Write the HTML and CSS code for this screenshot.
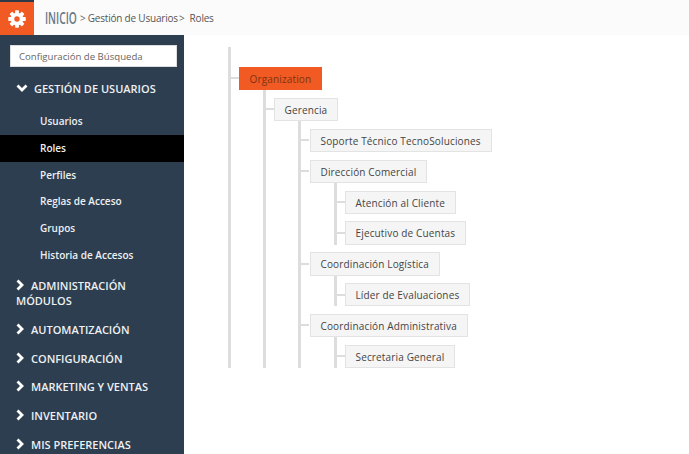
FILE: index.html
```html
<!DOCTYPE html>
<html lang="es">
<head>
<meta charset="utf-8">
<title>Roles</title>
<link rel="stylesheet" href="styles.css">
</head>
<body>
<header class="topbar">
  <a class="logo">
    <svg class="gear" viewBox="0 0 20 20" width="18" height="18">
      <g fill="#fff">
        <circle cx="10" cy="10" r="7"/>
        <rect x="7.9" y="0.3" width="4.2" height="19.4" rx="0.8"/>
        <rect x="7.9" y="0.3" width="4.2" height="19.4" rx="0.8" transform="rotate(45 10 10)"/>
        <rect x="7.9" y="0.3" width="4.2" height="19.4" rx="0.8" transform="rotate(90 10 10)"/>
        <rect x="7.9" y="0.3" width="4.2" height="19.4" rx="0.8" transform="rotate(135 10 10)"/>
      </g>
      <circle cx="10" cy="10" r="3" fill="#f15a22"/>
    </svg>
  </a>
  <nav class="crumbs">
    <span class="home">INICIO</span>
    <span class="sep">&gt;</span>
    <span class="crumb">Gestión de Usuarios</span>
    <span class="sep tight">&gt;</span>
    <span class="crumb">Roles</span>
  </nav>
</header>
<div class="body">
  <aside class="sidebar">
    <div class="search"><input class="search-input" type="text" placeholder="Configuración de Búsqueda"></div>
    <div class="group open">
      <svg class="chev-down" viewBox="0 0 12 9" width="12" height="9"><polyline points="1.5,1.5 6,6 10.5,1.5"/></svg>
      <span>GESTIÓN DE USUARIOS</span>
    </div>
    <ul class="sub">
      <li>Usuarios</li>
      <li class="active">Roles</li>
      <li>Perfiles</li>
      <li>Reglas de Acceso</li>
      <li>Grupos</li>
      <li>Historia de Accesos</li>
    </ul>
    <div class="group two"><svg class="chev" viewBox="0 0 9 12" width="9" height="12"><polyline points="1.5,1.5 6,6 1.5,10.5"/></svg>ADMINISTRACIÓN MÓDULOS</div>
    <div class="group"><svg class="chev" viewBox="0 0 9 12" width="9" height="12"><polyline points="1.5,1.5 6,6 1.5,10.5"/></svg>AUTOMATIZACIÓN</div>
    <div class="group"><svg class="chev" viewBox="0 0 9 12" width="9" height="12"><polyline points="1.5,1.5 6,6 1.5,10.5"/></svg>CONFIGURACIÓN</div>
    <div class="group"><svg class="chev" viewBox="0 0 9 12" width="9" height="12"><polyline points="1.5,1.5 6,6 1.5,10.5"/></svg>MARKETING Y VENTAS</div>
    <div class="group"><svg class="chev" viewBox="0 0 9 12" width="9" height="12"><polyline points="1.5,1.5 6,6 1.5,10.5"/></svg>INVENTARIO</div>
    <div class="group"><svg class="chev" viewBox="0 0 9 12" width="9" height="12"><polyline points="1.5,1.5 6,6 1.5,10.5"/></svg>MIS PREFERENCIAS</div>
  </aside>
  <main class="main">
    <ul class="tree root">
      <li><span class="node primary">Organization</span>
        <ul class="tree">
          <li><span class="node">Gerencia</span>
            <ul class="tree level3">
              <li><span class="node">Soporte Técnico TecnoSoluciones</span></li>
              <li><span class="node">Dirección Comercial</span>
                <ul class="tree">
                  <li><span class="node">Atención al Cliente</span></li>
                  <li><span class="node">Ejecutivo de Cuentas</span></li>
                </ul>
              </li>
              <li><span class="node">Coordinación Logística</span>
                <ul class="tree">
                  <li><span class="node">Líder de Evaluaciones</span></li>
                </ul>
              </li>
              <li><span class="node">Coordinación Administrativa</span>
                <ul class="tree">
                  <li><span class="node">Secretaria General</span></li>
                </ul>
              </li>
            </ul>
          </li>
        </ul>
      </li>
    </ul>
  </main>
</div>
</body>
</html>
```
FILE: styles.css
```css
* { box-sizing: border-box; }
html, body { margin: 0; padding: 0; height: 100%; overflow: hidden; }
body {
  width: 689px;
  height: 454px;
  display: flex;
  flex-direction: column;
  font-family: "Open Sans", "Liberation Sans", sans-serif;
  background: #fff;
}
ul { list-style: none; margin: 0; padding: 0; }

.topbar {
  height: 35px;
  flex: none;
  display: flex;
  background: #fbfbfb;
}
.logo {
  width: 34px;
  background: #f15a22;
  border-top: 2px solid #2c3a47;
  display: flex;
  align-items: center;
  justify-content: center;
}
.crumbs {
  display: flex;
  align-items: center;
  padding-left: 11px;
  font-size: 10px;
  color: #555;
}
.home {
  font-size: 17px;
  font-weight: 600;
  color: #68798a;
  width: 30px;
  margin-right: 5px;
  display: inline-block;
  transform: scaleX(0.6);
  transform-origin: left center;
}
.crumb { letter-spacing: -0.2px; }
.sep { margin-right: 2px; color: #666; }
.sep.tight { margin-left: 1px; margin-right: 5px; }

.body { flex: 1; display: flex; min-height: 0; }
.sidebar {
  width: 184px;
  flex: none;
  background: #2c3e50;
  overflow: hidden;
  color: #fff;
}
.search { padding: 10px 7px 0 10px; height: 39px; }
.search-input {
  display: block;
  width: 167px;
  height: 22px;
  border: 1px solid #ddd;
  background: #fff;
  padding: 0 8px;
  font: 9.6px "Open Sans", sans-serif;
  border-radius: 0;
  outline: none;
}
.search-input::placeholder { color: #666; opacity: 1; }

.group {
  font-size: 11px;
  font-weight: 600;
  line-height: 15px;
  padding: 7px 10px 6.7px 16px;
  color: #eef0f2;
}
.group.open { display: flex; align-items: center; gap: 6px; padding-top: 7px; padding-bottom: 12px; }
.group.two { padding-top: 9.3px; padding-bottom: 7px; }
.chev, .chev-down {
  fill: none;
  stroke: #fff;
  stroke-width: 2.8;
}
.chev { margin-right: 6px; vertical-align: -1px; }
.sub li {
  height: 26.8px;
  line-height: 27.5px;
  padding-left: 40px;
  font-size: 10px;
  font-weight: 600;
  color: #eef0f2;
}
.sub li.active { background: #000; }

.main { flex: 1; padding: 12px 0 0 44px; }
.tree {
  border-left: 3px solid #ddd;
  margin-left: 24px;
}
.tree.root { margin-left: 0; padding-top: 12.3px; }
.tree > li {
  padding: 7.7px 0 0 8px;
  position: relative;
}
.tree.level3 > li { padding-left: 9px; }
.tree > li::before {
  content: "";
  position: absolute;
  left: 0;
  top: 18px;
  width: 8px;
  height: 2px;
  background: #ddd;
}
.node {
  display: table;
  height: 23.2px;
  line-height: 20.2px;
  padding: 1px 10px 0 9.5px;
  font-size: 10px;
  color: #444;
  background: #f5f5f5;
  border: 1px solid #e3e3e3;
  white-space: nowrap;
  letter-spacing: 0.15px;
}
.node.primary {
  background: #f15a22;
  border-color: #f15a22;
  color: #7d3415;
}
```
